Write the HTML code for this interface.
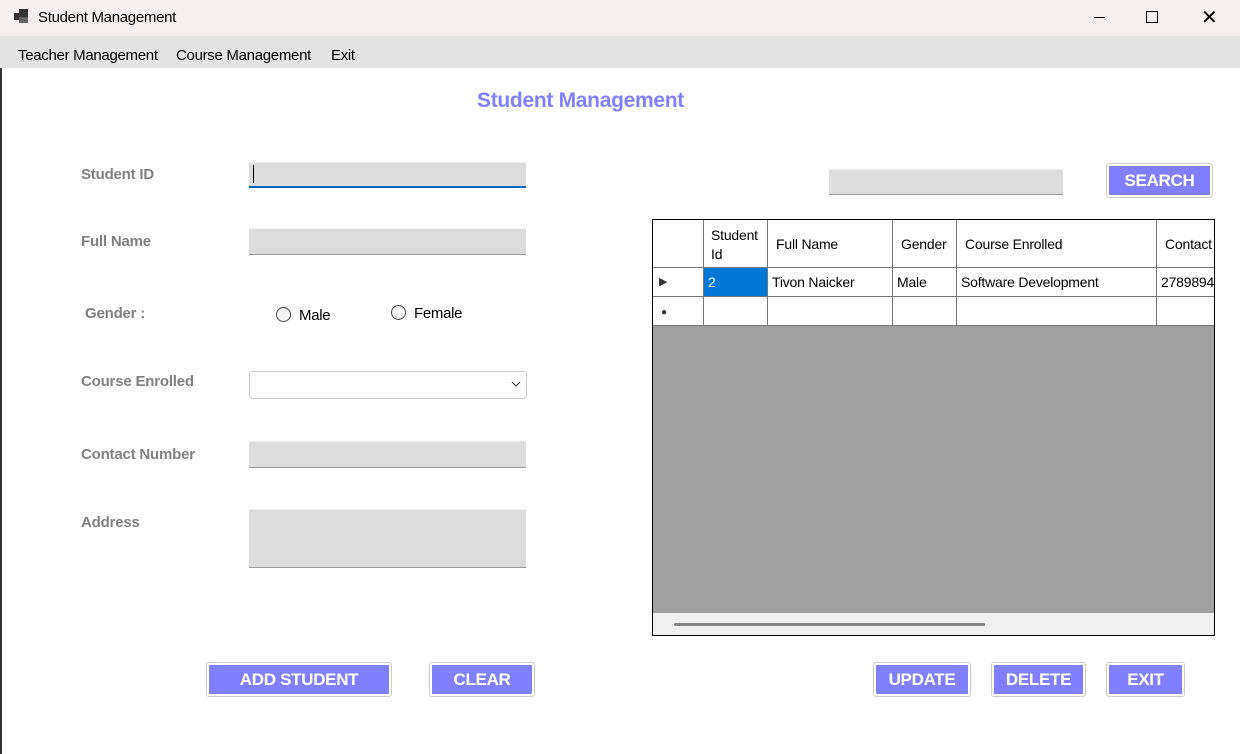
<!DOCTYPE html><html><head><style>
*{margin:0;padding:0;box-sizing:border-box}
body{width:1240px;height:754px;position:relative;background:#fff;font-family:"Liberation Sans",sans-serif;overflow:hidden}
.a{position:absolute}
.lbl{position:absolute;color:#808080;font-weight:bold;font-size:15px;letter-spacing:-0.2px}
.tb{position:absolute;background:#dcdcdc;border-top:1px solid #eee;border-bottom:1px solid #999}
.btn{position:absolute;border:1px solid #ccc;border-radius:3px;padding:2px;background:#fff}
.btn div{width:100%;height:100%;background:#8080ff;color:#fff;font-size:17px;text-align:center;line-height:30px;font-weight:bold;letter-spacing:-0.3px}
.cell{position:absolute;border-right:1px solid #777;border-bottom:1px solid #777;font-size:14px;color:#000;padding-left:4px;overflow:hidden;white-space:nowrap;letter-spacing:-0.2px}
.rad{position:absolute;width:15px;height:15px;border:1px solid #444;border-radius:50%;background:#f3f3f3}
.m{position:absolute;font-size:15px;letter-spacing:-0.3px}
</style></head><body>
<div class="a" style="left:0;top:0;width:1240px;height:36px;background:#f6eff0"></div>
<div class="a" style="left:14px;top:13px;width:6px;height:7px;background:#333"></div>
<div class="a" style="left:19px;top:9px;width:9px;height:8px;background:#333"></div>
<div class="a" style="left:19px;top:17px;width:9px;height:6px;background:#666"></div>
<div class="m" style="left:38px;top:9px">Student Management</div>
<div class="a" style="left:1094px;top:17px;width:11px;height:1px;background:#000"></div>
<div class="a" style="left:1146px;top:11px;width:12px;height:12px;border:1.5px solid #000"></div>
<div class="a" style="left:1201px;top:5px;font-size:20px;font-weight:300">✕</div>
<div class="a" style="left:0;top:36px;width:1240px;height:32px;background:#e3e3e3"></div>
<div class="m" style="left:18px;top:47px">Teacher Management</div>
<div class="m" style="left:176px;top:47px">Course Management</div>
<div class="m" style="left:331px;top:47px">Exit</div>
<div class="a" style="left:0;top:68px;width:2px;height:686px;background:#333"></div>

<div class="a" style="left:477px;top:89px;color:#8080ff;font-weight:bold;font-size:21px;letter-spacing:-0.3px">Student Management</div>

<div class="lbl" style="left:81px;top:166px">Student ID</div>
<div class="tb" style="left:249px;top:162px;width:277px;height:26px;border-bottom:2px solid #0067c0"></div>
<div class="a" style="left:253px;top:165px;width:1px;height:18px;background:#000"></div>
<div class="lbl" style="left:81px;top:233px">Full Name</div>
<div class="tb" style="left:249px;top:228px;width:277px;height:27px"></div>
<div class="lbl" style="left:85px;top:305px">Gender :</div>
<div class="rad" style="left:276px;top:307px"></div>
<div class="m" style="left:299px;top:307px">Male</div>
<div class="rad" style="left:391px;top:305px"></div>
<div class="m" style="left:414px;top:305px">Female</div>
<div class="lbl" style="left:81px;top:373px">Course Enrolled</div>
<div class="a" style="left:249px;top:371px;width:278px;height:28px;border:1px solid #ccc;border-radius:3px;background:#fdfdfd"></div>
<svg class="a" style="left:511px;top:381px" width="10" height="6"><path d="M1 1l4 4 4-4" fill="none" stroke="#333" stroke-width="1"/></svg>
<div class="lbl" style="left:81px;top:446px">Contact Number</div>
<div class="tb" style="left:249px;top:441px;width:277px;height:27px"></div>
<div class="lbl" style="left:81px;top:514px">Address</div>
<div class="tb" style="left:249px;top:509px;width:277px;height:59px"></div>

<div class="tb" style="left:829px;top:169px;width:234px;height:26px"></div>
<div class="btn" style="left:1106px;top:163px;width:107px;height:35px"><div>SEARCH</div></div>

<div class="a" style="left:652px;top:219px;width:563px;height:417px;border:1px solid #000;background:#a0a0a0;overflow:hidden">
<div class="a" style="left:0;top:0;width:562px;height:106px;background:#fff"></div>
<div class="cell" style="left:0;top:0;width:51px;height:48px"></div>
<div class="cell" style="left:51px;top:0;width:64px;height:48px;line-height:19px;padding-top:6px;padding-left:7px;white-space:normal">Student Id</div>
<div class="cell" style="left:115px;top:0;width:125px;height:48px;line-height:48px;padding-left:8px">Full Name</div>
<div class="cell" style="left:240px;top:0;width:64px;height:48px;line-height:48px;padding-left:8px">Gender</div>
<div class="cell" style="left:304px;top:0;width:200px;height:48px;line-height:48px;padding-left:8px">Course Enrolled</div>
<div class="cell" style="left:504px;top:0;width:70px;height:48px;line-height:48px;padding-left:8px">Contact</div>
<div class="cell" style="left:0;top:48px;width:51px;height:29px;line-height:29px;font-size:11px;padding-left:6px;color:#333">&#9654;</div>
<div class="cell" style="left:51px;top:48px;width:64px;height:29px;line-height:29px;background:#0078d7;color:#fff">2</div>
<div class="cell" style="left:115px;top:48px;width:125px;height:29px;line-height:29px">Tivon Naicker</div>
<div class="cell" style="left:240px;top:48px;width:64px;height:29px;line-height:29px">Male</div>
<div class="cell" style="left:304px;top:48px;width:200px;height:29px;line-height:29px">Software Development</div>
<div class="cell" style="left:504px;top:48px;width:70px;height:29px;line-height:29px">2789894</div>
<div class="cell" style="left:0;top:77px;width:51px;height:29px;line-height:31px;font-size:10px;padding-left:8px;color:#333">&#9679;</div>
<div class="cell" style="left:51px;top:77px;width:64px;height:29px"></div>
<div class="cell" style="left:115px;top:77px;width:125px;height:29px"></div>
<div class="cell" style="left:240px;top:77px;width:64px;height:29px"></div>
<div class="cell" style="left:304px;top:77px;width:200px;height:29px"></div>
<div class="cell" style="left:504px;top:77px;width:70px;height:29px"></div>
<div class="a" style="left:0;top:393px;width:562px;height:22px;background:#f0f0f0"></div>
<div class="a" style="left:21px;top:403px;width:311px;height:3px;background:#858585;border-radius:2px"></div>
</div>

<div class="btn" style="left:206px;top:662px;width:186px;height:35px"><div>ADD STUDENT</div></div>
<div class="btn" style="left:429px;top:662px;width:106px;height:35px"><div>CLEAR</div></div>
<div class="btn" style="left:873px;top:662px;width:98px;height:35px"><div>UPDATE</div></div>
<div class="btn" style="left:991px;top:662px;width:95px;height:35px"><div>DELETE</div></div>
<div class="btn" style="left:1106px;top:662px;width:79px;height:35px"><div>EXIT</div></div>
</body></html>
